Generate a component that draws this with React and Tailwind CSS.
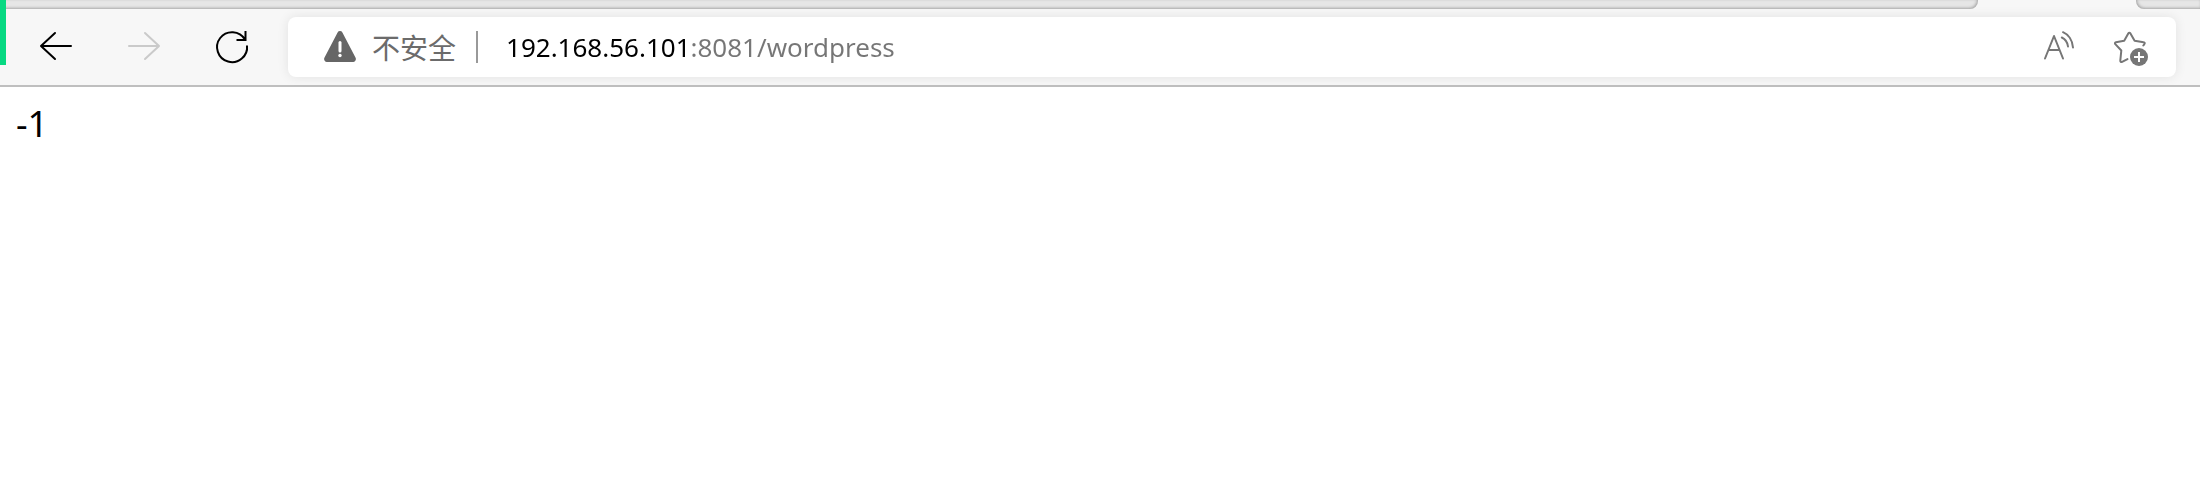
import { useState } from "react";

function ToolbarButton({ label, disabled, children }) {
  return (
    <button
      type="button"
      aria-label={label}
      disabled={disabled}
      className="flex h-12 w-16 shrink-0 items-center justify-center text-black disabled:text-[#cacaca]"
    >
      {children}
    </button>
  );
}

function TabStrip() {
  return (
    <div className="flex h-[9px] bg-[#f7f7f7]">
      <div className="flex-1 rounded-br-lg bg-[#e6e6e6] shadow-[inset_-1px_-1px_3px_rgba(0,0,0,0.28)]" />
      <div className="w-[158px]" />
      <div className="w-16 rounded-bl-lg bg-[#e6e6e6] shadow-[inset_1px_-1px_3px_rgba(0,0,0,0.28)]" />
    </div>
  );
}

function AddressBar() {
  const [url, setUrl] = useState("192.168.56.101:8081/wordpress");
  return (
    <div className="flex h-[60px] min-w-0 flex-1 items-center rounded-lg bg-white pr-6 pl-9 shadow-[0_0_12px_rgba(0,0,0,0.09)]">
      <button
        type="button"
        className="flex shrink-0 items-center gap-4 font-['Noto_Sans_CJK_SC',sans-serif] text-[28px] leading-8 text-[#6b6b6b]"
      >
        <svg width="32" height="32" viewBox="0 0 32 32" className="text-[#666666]" aria-hidden="true">
          <path
            d="M13.6 1.5a2.7 2.7 0 0 1 4.8 0l13.2 25.2c.9 1.8-.3 4.3-2.4 4.3H2.8C.7 31-.5 28.5.4 26.7Z"
            fill="currentColor"
          />
          <path d="M16 11.5v8.5" stroke="#fff" strokeWidth="3" strokeLinecap="round" />
          <circle cx="16" cy="24.500" r="1.700" fill="#fff" />
        </svg>
        不安全
      </button>
      <div className="ml-5 h-8 w-0.5 shrink-0 bg-[#999999]" />
      <input
        type="text"
        aria-label="地址"
        value={url}
        onChange={(e) => setUrl(e.target.value)}
        className="ml-7 h-10 min-w-0 flex-1 bg-[linear-gradient(90deg,#000_184px,#767676_184px)] bg-clip-text font-['Noto_Sans',sans-serif] text-[26px] text-transparent caret-black outline-none"
      />
      <div className="flex shrink-0 gap-8 text-[#767676]">
        <button type="button" aria-label="大声朗读" className="size-10">
          <svg width="40" height="40" viewBox="0 0 40 40" fill="none" stroke="currentColor" strokeWidth="2" strokeLinecap="round" aria-hidden="true">
            <path d="M5 31.5 14 9l9 22.5M8.500 23h11" strokeLinejoin="round" />
            <path d="M21.8 10.5C25 12 27.5 15.5 28 19.5M23 5.2C28.5 7.5 32.500 13.500 33 20.500" />
          </svg>
        </button>
        <button type="button" aria-label="将此页面添加到收藏夹" className="size-10">
          <svg width="40" height="40" viewBox="0 0 40 40" fill="none" aria-hidden="true">
            <path
              d="M32.300 18.500c.8-1 1.300-1.600 1.400-2 .2-.8-.3-1.200-1.100-1.300l-9-1.400-4.300-7.500c-.5-.9-1.400-.9-1.900 0l-4.200 7.500-8.300 1.400c-1 .2-1.300 1.200-.6 1.900l6 6.400-1 10.200c-.1 1.100.8 1.700 1.800 1.200l5.400-2.800"
              stroke="currentColor"
              strokeWidth="2"
              strokeLinecap="round"
              strokeLinejoin="round"
              transform="translate(-1 0)"
            />
            <circle cx="27" cy="30" r="9" fill="currentColor" />
            <path d="M27 25v10M22 30h10" stroke="#fff" strokeWidth="2" />
          </svg>
        </button>
      </div>
    </div>
  );
}

export default function App() {
  return (
    <div className="relative min-h-screen bg-white">
      <header>
        <TabStrip />
        <nav className="flex items-center gap-6 border-b-2 border-[#bfbfbf] bg-[#f7f7f7] px-6 py-2">
          <ToolbarButton label="返回">
            <svg width="36" height="36" viewBox="0 0 36 36" fill="none" stroke="currentColor" strokeWidth="2" strokeLinecap="round" strokeLinejoin="round" aria-hidden="true">
              <path d="M33 17H3M17 4 3 17l14 13" />
            </svg>
          </ToolbarButton>
          <ToolbarButton label="前进" disabled>
            <svg width="36" height="36" viewBox="0 0 36 36" fill="none" stroke="currentColor" strokeWidth="2" strokeLinecap="round" strokeLinejoin="round" aria-hidden="true">
              <path d="M3 17h30M19 4l14 13-14 13" />
            </svg>
          </ToolbarButton>
          <ToolbarButton label="刷新">
            <svg width="36" height="36" viewBox="0 0 36 36" fill="none" stroke="currentColor" strokeWidth="2" aria-hidden="true">
              <path d="M33 16.500A15 15 0 1 1 31 10.500M31.500 2v9H22.500" />
            </svg>
          </ToolbarButton>
          <AddressBar />
        </nav>
      </header>
      <main className="px-4 py-3 font-['Noto_Sans',sans-serif] text-4xl leading-[50px] text-black">
        -1
      </main>
      <div className="absolute top-0 left-0 h-[65px] w-1.5 bg-[#07d982]" />
    </div>
  );
}
